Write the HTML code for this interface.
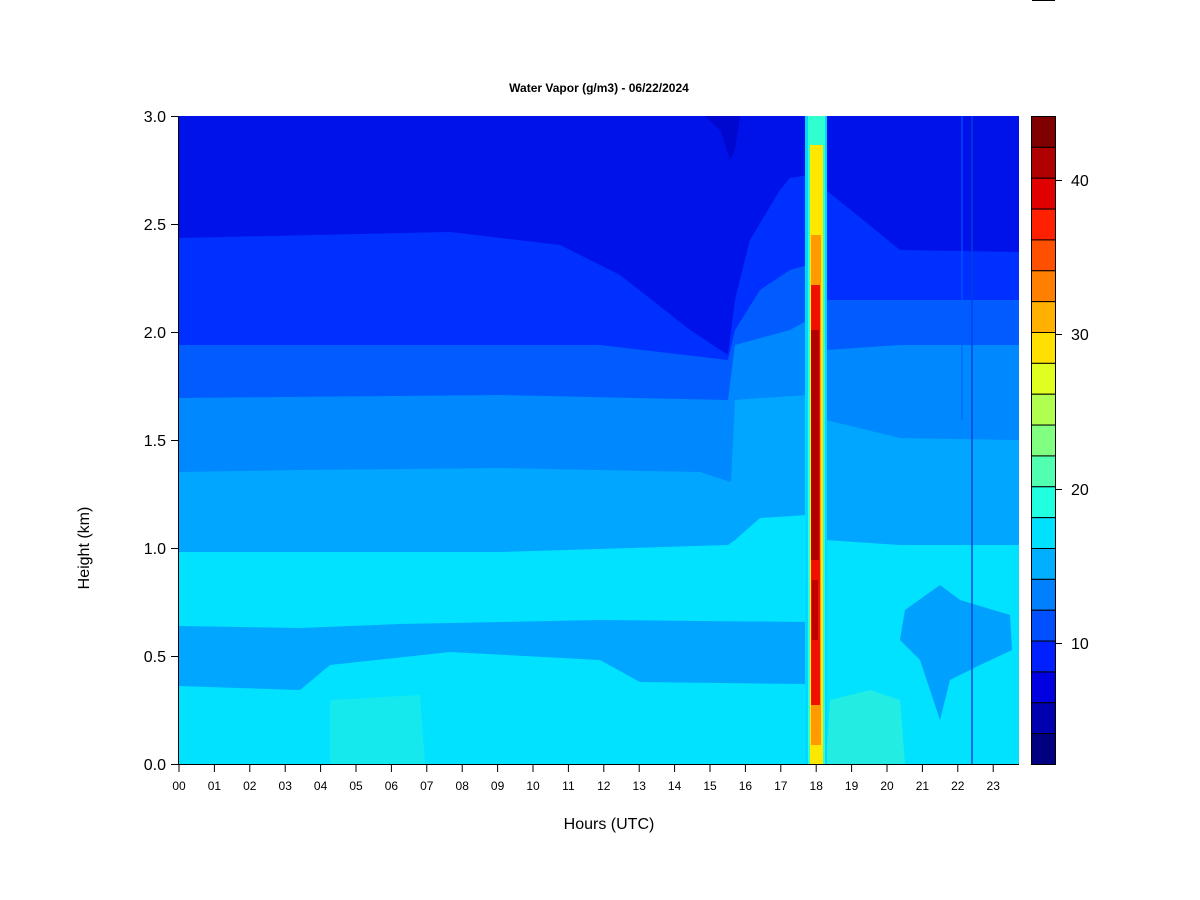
<!DOCTYPE html>
<html><head><meta charset="utf-8"><style>
body{margin:0;background:#fff;width:1200px;height:900px;overflow:hidden}
svg{display:block;font-family:"Liberation Sans",Arial,sans-serif}
</style></head><body>
<svg width="1200" height="900" viewBox="0 0 1200 900">
<rect width="1200" height="900" fill="#fff"/>
<line x1="1032" y1="0.5" x2="1055" y2="0.5" stroke="#000" stroke-width="1"/>
<text x="599" y="92" font-size="12" font-weight="bold" text-anchor="middle">Water Vapor (g/m3) - 06/22/2024</text>
<defs><clipPath id="pc"><rect x="178" y="116" width="841" height="648"/></clipPath></defs>
<g clip-path="url(#pc)">
<rect x="178" y="116" width="841" height="648" fill="#00e2ff"/>
<!-- 00a8ff -->
<path fill="#00a6ff" d="M178,116 H1019 V545 L900,545 L826,540 L808,515 L760,518 L735,540 L728,545 L500,552 L178,552 Z"/>
<!-- 0088ff -->
<path fill="#0088ff" d="M178,116 H1019 V440 L900,438 L826,420 L808,395 L760,398 L735,400 L731,482 L700,472 L500,468 L300,470 L178,472 Z"/>
<!-- 0060ff -->
<path fill="#005cff" d="M178,116 H1019 V345 L900,345 L826,350 L808,320 L790,330 L735,345 L728,400 L500,395 L178,398 Z"/>
<!-- 0030ff -->
<path fill="#0030ff" d="M178,116 H1019 V300 L860,300 L826,300 L808,265 L790,270 L760,290 L735,330 L728,360 L600,345 L178,345 Z"/>
<!-- 0010e8 -->
<path fill="#0012ea" d="M178,116 H1019 V252 L900,250 L826,190 L808,175 L790,178 L780,190 L750,240 L735,300 L728,355 L690,330 L620,275 L560,245 L450,232 L178,238 Z"/>
<path fill="#0008d0" d="M705,116 L740,116 L735,150 L730,160 L720,130 Z"/>
<!-- lower band -->
<path fill="#00a0ff" d="M178,626 L300,628 L400,624 L600,620 L808,622 L808,684 L640,682 L600,660 L450,652 L330,665 L300,690 L178,686 Z" opacity="0.9"/>
<path fill="#00a0ff" d="M905,610 L940,585 L960,600 L1010,615 L1012,650 L980,665 L950,680 L940,720 L920,660 L900,640 Z"/>
<!-- light greens near bottom -->
<path fill="#2cf0dc" d="M830,700 L870,690 L900,700 L905,764 L826,764 Z" opacity="0.8"/>
<path fill="#2cf0dc" d="M330,700 L420,695 L425,764 L330,764 Z" opacity="0.5"/>
<line x1="972" y1="116" x2="972" y2="764" stroke="#0040e0" stroke-width="2" opacity="0.7"/>
<line x1="962" y1="116" x2="962" y2="420" stroke="#0060ff" stroke-width="2" opacity="0.5"/>
<!-- spike -->
<rect x="805" y="116" width="22" height="648" fill="#00d8ff"/>
<rect x="808" y="116" width="17" height="648" fill="#30ffd0"/>
<rect x="810" y="145" width="13" height="619" fill="#ffe800"/>
<rect x="811" y="235" width="10" height="510" fill="#ff9a00"/>
<rect x="811" y="285" width="9" height="420" fill="#f01000"/>
<rect x="811" y="330" width="8" height="230" fill="#b00000"/>
<rect x="812" y="580" width="6" height="60" fill="#c00000"/>
</g>
<!-- axes -->
<g stroke="#000" stroke-width="1" fill="none">
<line x1="178.5" y1="116" x2="178.5" y2="765"/>
<line x1="178" y1="764.5" x2="1019" y2="764.5"/>
<line x1="171" y1="116.5" x2="178" y2="116.5"/>
<line x1="171" y1="224.5" x2="178" y2="224.5"/>
<line x1="171" y1="332.5" x2="178" y2="332.5"/>
<line x1="171" y1="440.5" x2="178" y2="440.5"/>
<line x1="171" y1="548.5" x2="178" y2="548.5"/>
<line x1="171" y1="656.5" x2="178" y2="656.5"/>
<line x1="171" y1="764.5" x2="178" y2="764.5"/>
</g>
<g font-size="16" text-anchor="end">
<text x="166" y="122">3.0</text><text x="166" y="230">2.5</text><text x="166" y="338">2.0</text>
<text x="166" y="446">1.5</text><text x="166" y="554">1.0</text><text x="166" y="662">0.5</text><text x="166" y="770">0.0</text>
</g>
<g id="xt" font-size="12" text-anchor="middle"></g>
<text x="609" y="829" font-size="16" text-anchor="middle">Hours (UTC)</text>
<text transform="translate(89,548) rotate(-90)" font-size="16" text-anchor="middle">Height (km)</text>
<!-- colorbar -->
<g id="cb" stroke="#000" stroke-width="1"></g>
<g font-size="16">
<text x="1071" y="186">40</text><text x="1071" y="340">30</text><text x="1071" y="495">20</text><text x="1071" y="649">10</text>
</g>
</svg>
<script>
var ns="http://www.w3.org/2000/svg",xt=document.getElementById('xt');
for(var h=0;h<24;h++){var x=179+35.4*h;
var l=document.createElementNS(ns,'line');l.setAttribute('x1',x);l.setAttribute('x2',x);l.setAttribute('y1',764);l.setAttribute('y2',772);l.setAttribute('stroke','#000');xt.appendChild(l);
var t=document.createElementNS(ns,'text');t.setAttribute('x',x);t.setAttribute('y',790);t.textContent=(h<10?'0':'')+h;xt.appendChild(t);}
var cols=['#800000','#b00000','#e00000','#ff2000','#ff5000','#ff8000','#ffb000','#ffe000','#e0ff20','#b0ff50','#80ff80','#50ffb0','#20ffe0','#00e0ff','#00b0ff','#0080ff','#0050ff','#0020ff','#0000e0','#0000b0','#000080'];
var cb=document.getElementById('cb'),s=648/21;
cols.forEach(function(c,i){var r=document.createElementNS(ns,'rect');r.setAttribute('x',1031.5);r.setAttribute('y',116.5+i*s);r.setAttribute('width',24);r.setAttribute('height',s);r.setAttribute('fill',c);cb.appendChild(r);});
[180,334,489,643].forEach(function(y){var l=document.createElementNS(ns,'line');l.setAttribute('x1',1055);l.setAttribute('x2',1062);l.setAttribute('y1',y+.5);l.setAttribute('y2',y+.5);cb.appendChild(l);});
</script>
</body></html>
